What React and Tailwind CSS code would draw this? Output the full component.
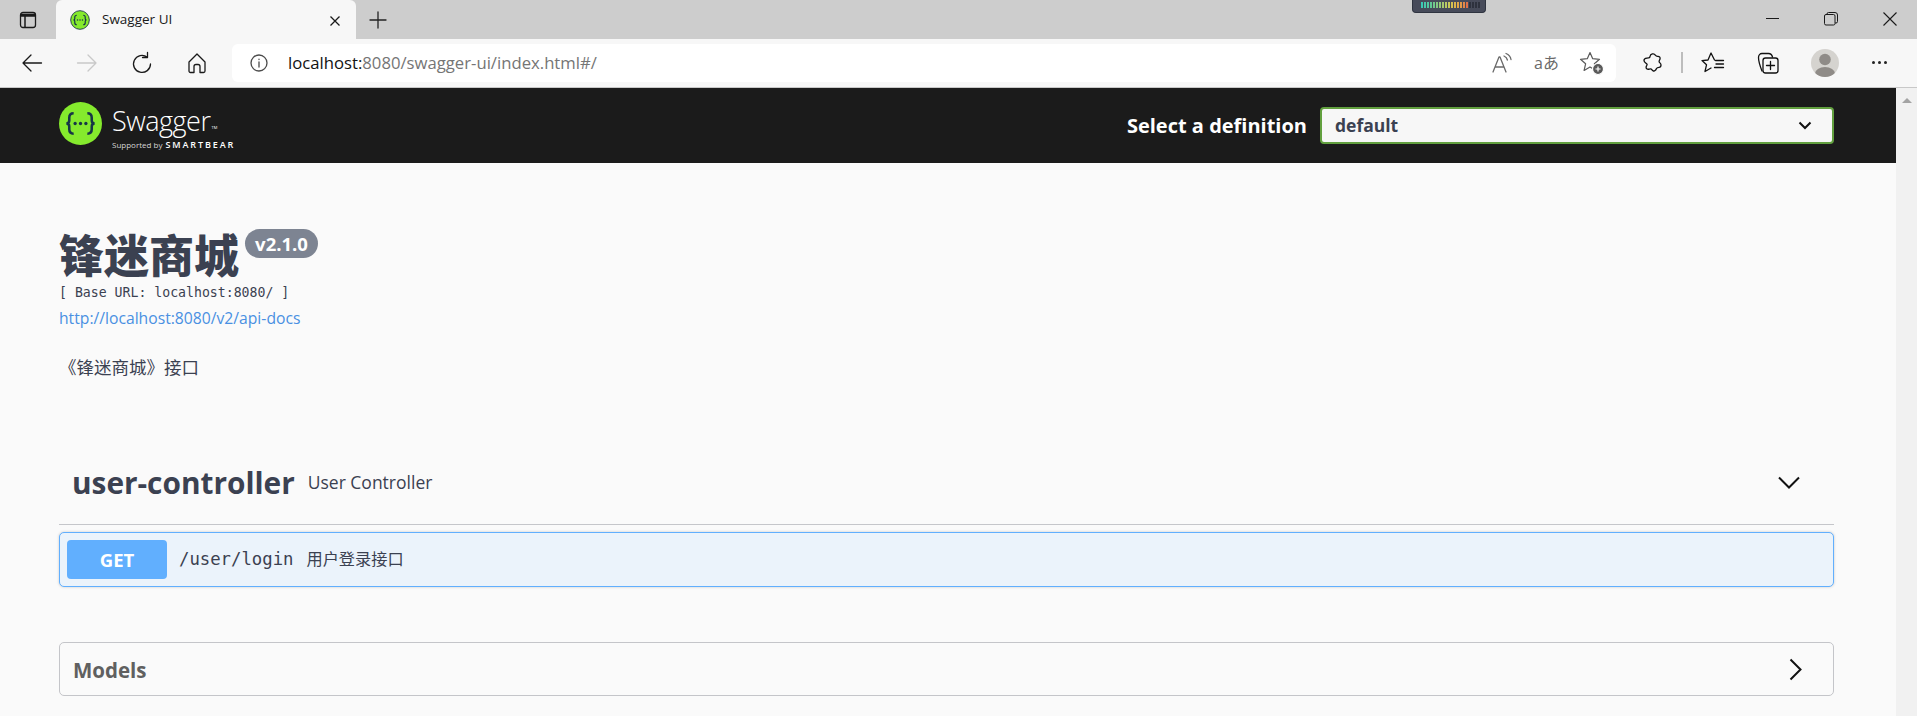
const sans = "font-['Open_Sans','Noto_Sans_CJK_SC',sans-serif]";

function Braces({ size, ring }) {
  return (
    <svg width={size} height={size} viewBox="0 0 44 44" className="shrink-0">
      <circle cx="22" cy="22" r={ring ? 20.5 : 22} fill="#85ea2d" stroke={ring ? "#1f3a4a" : "none"} strokeWidth={ring ? 2 : 0} />
      <path d="M15 11.5c-3.5 0-4.5 1.5-4.5 4.5v3c0 2-1 3-3 3 2 0 3 1 3 3v3c0 3 1 4.5 4.5 4.5" fill="none" stroke="#173647" strokeWidth="2.6" />
      <path d="M29 11.5c3.5 0 4.5 1.5 4.5 4.5v3c0 2 1 3 3 3-2 0-3 1-3 3v3c0 3-1 4.5-4.5 4.5" fill="none" stroke="#173647" strokeWidth="2.6" />
      <circle cx="16.5" cy="22" r="1.7" fill="#173647" />
      <circle cx="22" cy="22" r="1.7" fill="#173647" />
      <circle cx="27.5" cy="22" r="1.7" fill="#173647" />
    </svg>
  );
}

function Icon({ children, color = "#1a1a1a", w = 20, h = 20 }) {
  return (
    <svg width={w} height={h} viewBox={`0 0 ${w} ${h}`} fill="none" stroke={color} strokeWidth="1.3" strokeLinecap="round" strokeLinejoin="round">
      {children}
    </svg>
  );
}

function ToolButton({ children, className }) {
  return <div className={`flex h-full items-center justify-center ${className}`}>{children}</div>;
}

const meterColors = ["#3cc8b4", "#46c8aa", "#52c8a0", "#62c896", "#72c88c", "#82c882", "#94c878", "#a6c86e", "#b8c864", "#c8c85a", "#d4c050", "#dcb44a", "#e0a848", "#e49a48", "#e48848", "#e07048"];

function LevelMeter() {
  return (
    <div className="absolute left-[1412px] top-0 h-[13px] w-[74px] rounded-b-[4px] border border-t-0 border-[#2f3440] bg-[#474b5a]">
      <svg width="60" height="7" viewBox="0 0 60 7" className="ml-[8px] mt-[2px]">
        {meterColors.map((c, i) => (
          <rect key={i} x={i * 3} y="0" width="2" height="6" fill={c} />
        ))}
        {[48, 51, 54, 57].map((x) => (
          <rect key={x} x={x} y="0" width="2" height="6" fill="#2e323e" />
        ))}
      </svg>
    </div>
  );
}

function TabStrip() {
  return (
    <div className="flex h-[39px] items-end bg-[#cdcdcd]">
      <div className="flex h-full w-[56px] items-center justify-center">
        <Icon w={18} h={18}>
          <rect x="1.5" y="1.5" width="15" height="15" rx="2.5" />
          <path d="M2 3.5h14M2 5h14M2 4.2h14M6 5v11" strokeWidth="1.5" />
        </Icon>
      </div>
      <div className="flex h-full w-[300px] items-center rounded-t-[6px] bg-[#f7f7f7] pl-[14px]">
        <Braces size={20} ring />
        <span className={`ml-[12px] text-[13.5px] text-[#1a1a1a] ${sans}`}>Swagger UI</span>
        <svg width="12" height="12" viewBox="0 0 12 12" className="ml-auto mr-[15px] mt-[2px]" stroke="#1a1a1a" strokeWidth="1.3">
          <path d="M1.5 1.5l9 9M10.5 1.5l-9 9" />
        </svg>
      </div>
      <div className="ml-[13px] flex h-full items-center">
        <Icon w={18} h={18} color="#222">
          <path d="M9 1v16M1 9h16" />
        </Icon>
      </div>
      <div className="ml-auto flex h-full items-center pb-[2px] pr-[20px]">
        <div className="mr-[45px] h-px w-[13px] bg-[#1a1a1a]" />
        <svg width="14" height="14" viewBox="0 0 14 14" fill="none" stroke="#1a1a1a" className="mr-[45px]">
          <rect x="0.5" y="2.5" width="10.5" height="10.5" rx="1.5" />
          <path d="M3 2.5V2a1.5 1.5 0 0 1 1.5-1.5H11A2.5 2.5 0 0 1 13.5 3v6.5A1.5 1.5 0 0 1 12 11h-1" />
        </svg>
        <svg width="14" height="14" viewBox="0 0 14 14" stroke="#1a1a1a" strokeWidth="1.1">
          <path d="M.5.5l13 13M13.5.5l-13 13" />
        </svg>
      </div>
    </div>
  );
}

function Toolbar() {
  return (
    <div className="flex h-[49px] items-center border-b border-[#c8c8c8] bg-[#f7f7f7] pb-[1px] pl-[4px]">
      <ToolButton className="w-[55px]">
        <Icon w={22} h={20}>
          <path d="M20.5 10H2M10 2l-8 8 8 8" />
        </Icon>
      </ToolButton>
      <ToolButton className="w-[55px]">
        <Icon w={22} h={20} color="#c9c9c9">
          <path d="M1.5 10H20M12 2l8 8-8 8" />
        </Icon>
      </ToolButton>
      <ToolButton className="w-[55px]">
        <Icon w={24} h={24}>
          <path d="M20.5 13a8.500 8.500 0 1 1-3.200-6.700M17.500 1.500v5h-5" />
        </Icon>
      </ToolButton>
      <ToolButton className="w-[55px]">
        <Icon w={20} h={22}>
          <path d="M2 10l8-8 8 8v9a1.5 1.5 0 0 1-1.5 1.5H13v-6a2 2 0 0 0-2-2H9a2 2 0 0 0-2 2v6H3.5A1.5 1.5 0 0 1 2 19z" />
        </Icon>
      </ToolButton>
      <div className="ml-[8px] flex h-[38px] w-[1384px] items-center rounded-[6px] bg-white pl-[18px] pr-[2px]">
        <Icon w={18} h={18} color="#4a4a4a">
          <circle cx="9" cy="9" r="8" />
          <path d="M9 8v5M9 5.2v.4" />
        </Icon>
        <span className={`ml-[20px] text-[16.700px] text-[#757575] ${sans}`}>
          <span className="text-[#111]">localhost:</span>8080/swagger-ui/index.html#/
        </span>
        <ToolButton className="ml-auto w-[45px]">
          <Icon w={24} h={22} color="#6a6a6a">
            <path d="M3 20l6-15h1l6 15M5 15h9" />
            <path d="M14 4c2 .8 3 2 3.4 4M16 1.5c3 1.2 4.5 3 5 6" />
          </Icon>
        </ToolButton>
        <ToolButton className="w-[45px]">
          <span className={`text-[16px] leading-none text-[#6a6a6a] ${sans}`}>aあ</span>
        </ToolButton>
        <ToolButton className="w-[45px]">
          <svg width="26" height="26" viewBox="0 0 26 26" fill="none" stroke="#5a5a5a" strokeWidth="1.2" strokeLinejoin="round">
            <path d="M11 2.500l2.700 6.200 6.800.6-5.100 4.500 1.500 6.600-5.900-3.500-5.900 3.500 1.500-6.600L1.500 9.300l6.800-.6z" />
            <circle cx="19" cy="19" r="5.500" fill="#5a5a5a" stroke="#fff" />
            <path d="M19 16.500v5M16.500 19h5" stroke="#fff" />
          </svg>
        </ToolButton>
      </div>
      <ToolButton className="ml-[8px] w-[55px]">
        <Icon w={22} h={24} color="#111">
          <path d="M9 5.5a3 3 0 0 1 5.5-1.2c.5.9 1.5 1.1 2.5 1 1.5 0 2.5 1.2 2 2.7-.3 1-.9 1.5-.9 2.5 0 1.3 1.900 1.600 1.900 3.500 0 1.300-.9 2.300-2 2.300-1.300 0-2 .2-2.500 1.200-.7 1.800-2 3-3.500 2.300-1.100-.6-1.100-2-2.500-2-1.200 0-2.200 1-3.500.2-1.200-.8-1.100-2.300-.3-3.300.5-.6.6-1.300 0-1.900-1-1-2.700-1.500-2.700-3.200 0-1.500 1.500-2.300 2.900-2.400 1.500-.1 3.100-.3 3.100-1.700z" />
        </Icon>
      </ToolButton>
      <div className="ml-[2px] h-[21px] w-[2px] bg-[#bdbdbd]" />
      <ToolButton className="ml-[2px] w-[55px]">
        <Icon w={24} h={24} color="#111">
          <path d="M14.500 9.500h8M15 13h7.500M13.500 16.500h9M13.500 9l-3.500-7-3 7-6 .6 4.500 4.200-1.500 6.700 6-3.500" />
        </Icon>
      </ToolButton>
      <ToolButton className="w-[55px]">
        <Icon w={24} h={24} color="#111">
          <path d="M6 20C4 15 2.500 10 2.500 6.500 2.500 4 4 2.500 6 2.500h6.500c2 0 3.500 1.500 4 3.500" />
          <rect x="7" y="7" width="15" height="15" rx="2.500" />
          <path d="M14.500 10.500v8M10.500 14.500h8" />
        </Icon>
      </ToolButton>
      <ToolButton className="w-[55px] translate-x-[2px]">
        <svg width="28" height="28" viewBox="0 0 28 28">
          <defs>
            <clipPath id="avatar-clip">
              <circle cx="14" cy="14" r="14" />
            </clipPath>
          </defs>
          <circle cx="14" cy="14" r="14" fill="#d5d3cf" />
          <g clipPath="url(#avatar-clip)" fill="#8f8b87">
            <circle cx="14" cy="10.500" r="5.800" />
            <ellipse cx="14" cy="24.500" rx="10" ry="6.500" />
          </g>
        </svg>
      </ToolButton>
      <ToolButton className="ml-[2px] w-[55px] gap-[3px]">
        <span className="size-[3px] rounded-full bg-[#222]" />
        <span className="size-[3px] rounded-full bg-[#222]" />
        <span className="size-[3px] rounded-full bg-[#222]" />
      </ToolButton>
    </div>
  );
}

function TopBar() {
  return (
    <div className="flex h-[75px] items-center justify-between bg-[#1b1b1b] pl-[59px] pr-[62px]">
      <div className="flex items-start">
        <Braces size={43} />
        <div className={`ml-[10px] flex flex-col text-white ${sans}`}>
          <div className="flex h-[38px] items-center">
            <span className="text-[27px] font-light leading-none tracking-[-0.5px]">Swagger</span>
            <span className="ml-[1px] mt-[14px] text-[4px]">TM</span>
          </div>
          <div className="flex h-[10px] items-center whitespace-nowrap">
            <span className="text-[8px] text-[#d6d6d6]">Supported by</span>
            <span className="ml-[3px] text-[9px] font-semibold tracking-[1.900px]">SMARTBEAR</span>
          </div>
        </div>
      </div>
      <div className="flex items-center">
        <span className={`mr-[13px] text-[20px] font-bold text-white ${sans}`}>Select a definition</span>
        <div className="flex h-[37px] w-[514px] items-center justify-between rounded-[4px] border-2 border-[#62a03f] bg-[#f7f7f7] pl-[13px] pr-[20px]">
          <span className={`text-[17.500px] font-bold text-[#3b4151] ${sans}`}>default</span>
          <svg width="14" height="9" viewBox="0 0 14 9" fill="none" stroke="#111" strokeWidth="2">
            <path d="M1.500 1.500L7 7l5.500-5.500" />
          </svg>
        </div>
      </div>
    </div>
  );
}

function Info() {
  return (
    <div className={`pt-[66px] text-[#3b4151] ${sans}`}>
      <div className="flex items-start">
        <h2 className="text-[45px] font-black leading-[54px]">锋迷商城</h2>
        <span className="ml-[6px] flex h-[29px] w-[73px] items-center justify-center rounded-full bg-[#7d8492] text-[18.500px] font-bold text-white">
          v2.1.0
        </span>
      </div>
      <div className="mt-[1px] font-['DejaVu_Sans_Mono',monospace] text-[13.200px] leading-[18px]">[ Base URL: localhost:8080/ ]</div>
      <div className="mt-[5px] text-[15.700px] leading-[22px] text-[#4990e2]">http://localhost:8080/v2/api-docs</div>
      <p className="mt-[25px] text-[17.500px] leading-[26px]">《锋迷商城》接口</p>
    </div>
  );
}

function Operations() {
  return (
    <div className={`text-[#3b4151] ${sans}`}>
      <div className="mt-[64px] flex h-[81px] items-center border-b border-[#c5c6ca] pb-[3px] pl-[13px] pr-[34px]">
        <h3 className="text-[29.800px] font-bold leading-none">user-controller</h3>
        <span className="ml-[13px] text-[17.500px] leading-none">User Controller</span>
        <svg width="22" height="13" viewBox="0 0 22 13" fill="none" stroke="#111" strokeWidth="2" className="ml-auto">
          <path d="M1 1.500l10 10 10-10" />
        </svg>
      </div>
      <div className="mt-[7px] flex h-[55px] items-center rounded-[5px] border border-[#61affe] bg-[#ebf3fb] pl-[7px] shadow-[0_0_3px_rgba(0,0,0,0.19)]">
        <div className="flex h-[39px] w-[100px] items-center justify-center rounded-[4px] bg-[#61affe] text-[18.500px] font-bold text-white">GET</div>
        <span className="ml-[12px] font-['DejaVu_Sans_Mono',monospace] text-[17.300px] text-[#3b4151]">/user/login</span>
        <span className="ml-[13px] text-[16.200px]">用户登录接口</span>
      </div>
      <div className="mt-[55px] flex h-[54px] items-center justify-between rounded-[5px] border border-[#c4c5c9] pl-[13px] pr-[31px]">
        <span className="pt-[2px] text-[20.500px] font-bold text-[#606060]">Models</span>
        <svg width="13" height="23" viewBox="0 0 13 23" fill="none" stroke="#111" strokeWidth="2">
          <path d="M1.500 1.500l10 10-10 10" />
        </svg>
      </div>
    </div>
  );
}

export default function App() {
  return (
    <div className="relative flex h-[716px] flex-col overflow-hidden bg-[#fafafa]">
      <TabStrip />
      <LevelMeter />
      <Toolbar />
      <div className="flex min-h-0 flex-1">
        <div className="min-w-0 flex-1">
          <TopBar />
          <div className="pl-[59px] pr-[62px]">
            <Info />
            <Operations />
          </div>
        </div>
        <div className="flex w-[21px] justify-center bg-[#f1f1f1] pt-[10px]">
          <div className="h-0 w-0 border-x-[5px] border-b-[5px] border-x-transparent border-b-[#a3a3a3]" />
        </div>
      </div>
    </div>
  );
}
